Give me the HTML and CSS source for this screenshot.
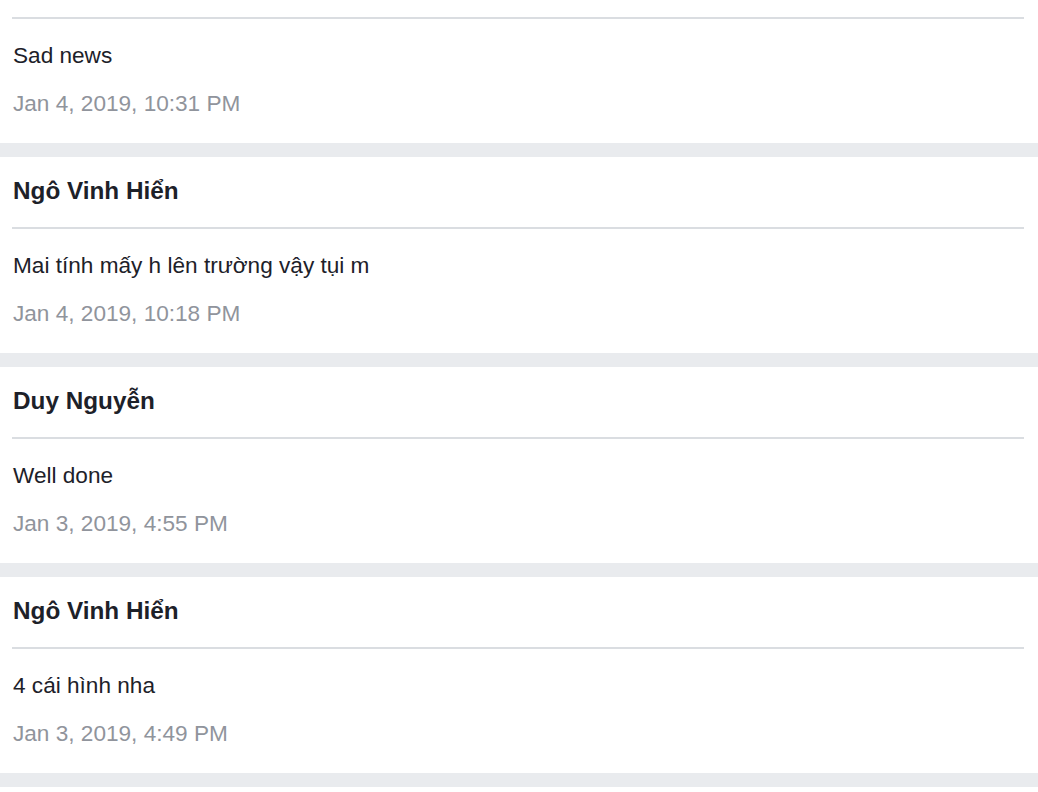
FILE: index.html
```html
<!DOCTYPE html>
<html>
<head>
<meta charset="utf-8">
<link rel="stylesheet" href="styles.css">
</head>
<body>
<div class="feed">
  <div class="card">
    <div class="head"></div>
    <div class="msg">Sad news</div>
    <div class="date">Jan 4, 2019, 10:31 PM</div>
  </div>
  <div class="card">
    <div class="head"><span class="name">Ngô Vinh Hiển</span></div>
    <div class="msg">Mai tính mấy h lên trường vậy tụi m</div>
    <div class="date">Jan 4, 2019, 10:18 PM</div>
  </div>
  <div class="card">
    <div class="head"><span class="name">Duy Nguyễn</span></div>
    <div class="msg">Well done</div>
    <div class="date">Jan 3, 2019, 4:55 PM</div>
  </div>
  <div class="card">
    <div class="head"><span class="name">Ngô Vinh Hiển</span></div>
    <div class="msg">4 cái hình nha</div>
    <div class="date">Jan 3, 2019, 4:49 PM</div>
  </div>
  <div class="card"></div>
</div>
</body>
</html>
```

FILE: styles.css
```css
html, body {
  margin: 0;
  padding: 0;
  background: #ffffff;
  overflow: hidden;
}
body {
  font-family: "Liberation Sans", Arial, sans-serif;
  color: #1d2129;
}
.feed {
  display: flex;
  flex-direction: column;
  gap: 14px;
  background: #e9ebee;
  margin-top: -53px;
}
.card {
  background: #ffffff;
  height: 196px;
  padding: 0 14px 0 12px;
  box-sizing: border-box;
}
.head {
  height: 72px;
  border-bottom: 2px solid #dadde1;
  padding-top: 19px;
  box-sizing: border-box;
}
.name {
  display: block;
  padding-left: 1px;
  font-size: 24.3px;
  font-weight: bold;
  line-height: 30px;
}
.msg {
  padding-left: 1px;
  font-size: 22.6px;
  line-height: 30px;
  margin-top: 22px;
}
.date {
  padding-left: 1px;
  font-size: 22.6px;
  line-height: 30px;
  margin-top: 18px;
  color: #90949c;
}
```
